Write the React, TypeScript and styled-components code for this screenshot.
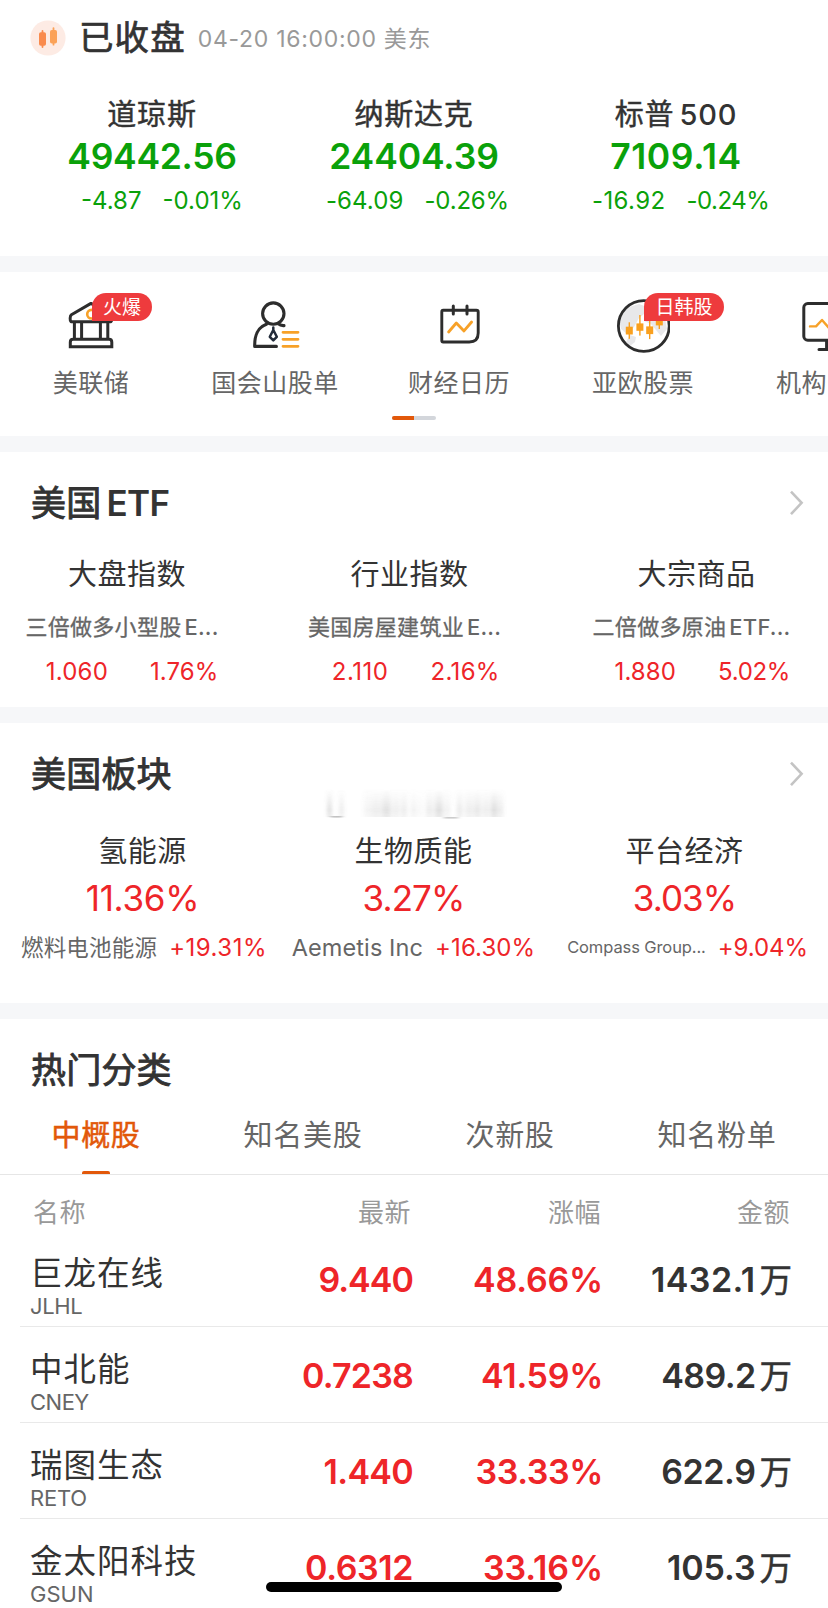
import React from 'react';
import styled, { createGlobalStyle, css } from 'styled-components';

const GlobalStyle = createGlobalStyle`
  * { box-sizing: border-box; }
  html, body { margin: 0; padding: 0; background: #fff; }
  body {
    width: 828px;
    height: 1608px;
    overflow: hidden;
    font-family: Inter, "Noto Sans CJK SC", sans-serif;
    color: #333;
  }
`;

const GREEN = '#0aa10a';
const RED = '#ee2529';
const ORANGE = '#e2580a';

const spacing = css<{ $ls?: number }>`
  letter-spacing: ${(p) => p.$ls ?? 0}px;
  white-space: nowrap;
`;

const Screen = styled.main`
  position: relative;
  width: 828px;
  height: 1608px;
  overflow: hidden;
  background: #fff;
`;

const Section = styled.section<{ $height: number }>`
  position: relative;
  display: flex;
  flex-direction: column;
  height: ${(p) => p.$height}px;
  overflow: hidden;
  > * { flex-shrink: 0; }
`;

const Band = styled.div`
  height: 16px;
  background: #f6f7f9;
`;

/* ---------- market status ---------- */

const StatusBar = styled.header`
  display: flex;
  align-items: center;
  height: 40px;
  margin-top: 18px;
  padding-left: 30px;
`;

const StatusTitle = styled.h1`
  margin: 0 0 0 13px;
  font-size: 34.5px;
  line-height: 40px;
  font-weight: 400;
  letter-spacing: 1.1px;
  -webkit-text-stroke: 0.7px #333;
`;

const StatusTime = styled.span`
  margin: 1px 0 0 12px;
  font-size: 23px;
  line-height: 40px;
  letter-spacing: 0.7px;
  color: #999;
  white-space: nowrap;
`;

const IndexGrid = styled.div`
  display: grid;
  grid-template-columns: repeat(3, 262px);
  padding: 0 21px;
  margin-top: 35px;
`;

const IndexCell = styled.div`
  display: flex;
  flex-direction: column;
  align-items: center;
`;

const IndexName = styled.div`
  margin-bottom: -2px;
  font-size: 29px;
  line-height: 43px;
  letter-spacing: 0.8px;
  -webkit-text-stroke: 0.45px #333;
`;

const IndexLatin = styled.span`
  margin-left: 5px;
  font-weight: 500;
  -webkit-text-stroke: 0;
`;

const IndexValue = styled.div<{ $ls?: number }>`
  ${spacing}
  font-size: 35.5px;
  line-height: 45px;
  font-weight: 600;
  color: ${GREEN};
`;

const SplitRow = styled.div<{ $gap: number; $color: string; $height: number; $shift?: number }>`
  display: grid;
  grid-template-columns: 1fr 1fr;
  column-gap: ${(p) => p.$gap}px;
  width: 100%;
  padding-left: ${(p) => p.$shift ?? 0}px;
  font-size: 24px;
  line-height: ${(p) => p.$height}px;
  color: ${(p) => p.$color};
  > :first-child { text-align: right; }
`;

const Figure = styled.span<{ $ls?: number }>`
  ${spacing}
`;

/* ---------- shortcuts ---------- */

const Shortcuts = styled.nav`
  display: flex;
  margin-left: -1px;
  padding-top: 27px;
  overflow: hidden;
`;

const Shortcut = styled.a`
  position: relative;
  flex: 0 0 184px;
  display: flex;
  flex-direction: column;
  align-items: center;
  svg { display: block; width: 54px; height: 54px; }
`;

const PartialShortcut = styled(Shortcut)`
  flex-basis: 93px;
  align-items: flex-start;
  padding-left: 41px;
  svg { margin-left: 23px; }
`;

const ShortcutLabel = styled.span`
  margin-top: 12px;
  font-size: 25px;
  line-height: 36px;
  letter-spacing: 0.5px;
  color: #666;
  white-space: nowrap;
`;

const Badge = styled.span<{ $width: number }>`
  position: absolute;
  left: 93px;
  top: -6px;
  width: ${(p) => p.$width}px;
  height: 28px;
  border-radius: 14px 14px 14px 0;
  background: #ee3b3d;
  color: #fff;
  font-size: 19px;
  line-height: 29px;
  text-align: center;
`;

const Pager = styled.div`
  display: flex;
  width: 44px;
  height: 4px;
  margin: 15px 0 0 392px;
  border-radius: 2px;
  background: #d3d6db;
  &::before {
    content: '';
    width: 22px;
    border-radius: 2px 0 0 2px;
    background: ${ORANGE};
  }
`;

/* ---------- section heads ---------- */

const SectionHead = styled.div`
  display: flex;
  align-items: center;
  justify-content: space-between;
  height: 44px;
  margin-top: 29px;
  padding: 0 24px 0 31px;
`;

const SectionTitle = styled.h2`
  margin: 0;
  font-size: 35px;
  line-height: 44px;
  font-weight: 400;
  letter-spacing: 0.2px;
  -webkit-text-stroke: 0.9px #333;
`;

const TitleLatin = styled.span`
  margin-left: 5px;
  font-weight: 600;
  letter-spacing: -0.6px;
  -webkit-text-stroke: 0;
`;

/* ---------- ETF ---------- */

const EtfGrid = styled.div`
  display: grid;
  grid-template-columns: 254px 311px 263px;
  margin-top: 26px;
`;

const Card = styled.div`
  display: flex;
  flex-direction: column;
  align-items: center;
`;

const EtfName = styled.div`
  font-size: 29px;
  line-height: 48px;
  letter-spacing: 0.5px;
`;

const EtfFund = styled.div`
  padding-right: 10px;
  font-size: 22px;
  line-height: 57px;
  letter-spacing: 0.3px;
  color: #666;
  white-space: nowrap;
  -webkit-text-stroke: 0.3px #666;
`;

const FundLatin = styled.span`
  margin-left: 3px;
  font-weight: 500;
  letter-spacing: 0.2px;
  -webkit-text-stroke: 0;
`;

/* ---------- sectors ---------- */

const SectorGrid = styled.div`
  display: grid;
  grid-template-columns: repeat(3, 271px);
  padding: 0 7px;
  margin-top: 30px;
`;

const SectorName = styled.div`
  font-size: 29px;
  line-height: 51px;
  letter-spacing: 0.5px;
`;

const SectorChange = styled.div<{ $ls?: number }>`
  ${spacing}
  font-size: 35px;
  line-height: 42px;
  color: ${RED};
`;

const Leader = styled.div<{ $shift: number }>`
  display: flex;
  gap: 12px;
  padding-left: ${(p) => p.$shift}px;
  line-height: 57px;
`;

const LeaderName = styled.span<{ $size: number; $ls?: number }>`
  ${spacing}
  font-size: ${(p) => p.$size}px;
  color: #666;
`;

const LeaderChange = styled.span<{ $ls?: number }>`
  ${spacing}
  font-size: 24px;
  color: ${RED};
`;

const Smudge = styled.svg`
  position: absolute;
  left: 320px;
  top: 63px;
  width: 190px;
  height: 36px;
`;

/* ---------- hot list ---------- */

const Tabs = styled.div`
  display: grid;
  grid-template-columns: repeat(4, 207px);
  height: 83px;
  padding-top: 20px;
  border-bottom: 1px solid #e6e6e6;
`;

const Tab = styled.div<{ $active?: boolean }>`
  position: relative;
  padding-right: 15px;
  text-align: center;
  font-size: 29px;
  line-height: 47px;
  letter-spacing: 0.7px;
  color: ${(p) => (p.$active ? ORANGE : '#666')};
  ${(p) =>
    p.$active &&
    css`
      -webkit-text-stroke: 0.5px ${ORANGE};
      &::after {
        content: '';
        position: absolute;
        left: 82px;
        bottom: 0;
        width: 28px;
        height: 3px;
        border-radius: 2px 2px 0 0;
        background: ${ORANGE};
      }
    `}
`;

const tableColumns = css`
  display: grid;
  grid-template-columns: 1fr 173px 190px 189px;
`;

const TableHead = styled.div`
  ${tableColumns}
  padding: 19px 38px 0 33px;
  font-size: 26px;
  line-height: 37px;
  letter-spacing: 0.5px;
  color: #999;
  > :not(:first-child) { text-align: right; }
`;

const TableRow = styled.div`
  ${tableColumns}
  height: 96px;
  margin-left: 20px;
  padding: 0 36px 0 10px;
  border-bottom: 1px solid #e9e9e9;
`;

const StockCell = styled.div`
  display: flex;
  flex-direction: column;
  padding-top: 22px;
`;

const StockName = styled.span`
  font-size: 32.5px;
  line-height: 41px;
  letter-spacing: 1px;
  white-space: nowrap;
`;

const StockCode = styled.span<{ $ls?: number }>`
  ${spacing}
  font-size: 22px;
  line-height: 24px;
  color: #666;
`;

const Num = styled.span<{ $ls?: number; $dark?: boolean }>`
  ${spacing}
  padding-top: 22px;
  text-align: right;
  font-size: 34px;
  line-height: 53px;
  font-weight: 600;
  color: ${(p) => (p.$dark ? '#333' : RED)};
`;

const Unit = styled.span`
  margin-left: 4px;
  font-size: 32.5px;
  font-weight: 400;
  letter-spacing: 0;
  -webkit-text-stroke: 0.5px #333;
`;

const HomeBar = styled.div`
  position: absolute;
  left: 266px;
  top: 1582px;
  width: 296px;
  height: 10px;
  border-radius: 5px;
  background: #000;
`;

/* ---------- drawings ---------- */

const INK = '#2d2d2d';
const AMBER = '#f7a128';

const MarketIcon = () => (
  <svg width="36" height="36" viewBox="0 0 36 36">
    <circle cx="18" cy="18" r="17.6" fill="#fdebe4" />
    <g fill="#f98b4e">
      <rect x="9" y="12.3" width="7" height="13.5" rx="1.8" />
      <rect x="11.6" y="10" width="1.8" height="18" rx="0.9" />
    </g>
    <g fill="#fba258">
      <rect x="20" y="10" width="7" height="13.5" rx="1.8" />
      <rect x="22.6" y="7.2" width="1.8" height="18.4" rx="0.9" />
    </g>
  </svg>
);

const BankIcon = () => (
  <svg viewBox="0 0 54 54" fill="none" stroke={INK} strokeWidth="3" strokeLinejoin="round">
    <circle cx="27.5" cy="15.2" r="4.3" stroke={AMBER} strokeWidth="2.6" />
    <path d="M7 22.7C5.8 21.6 5.8 17 7.4 15.8L27 4.4L46.6 15.8C48.2 17 48.2 21.6 47 22.7Z" />
    <path d="M10.4 23V40M17.6 23V40M36.4 23V40M43.8 23V40" />
    <path d="M6.3 47.7V43.2Q6.3 40.3 9.2 40.3H45Q47.8 40.3 47.8 43.2V47.7Z" strokeLinejoin="miter" />
  </svg>
);

const PersonIcon = () => (
  <svg viewBox="0 0 54 54" fill="none" stroke={INK} strokeWidth="3.1" strokeLinecap="round" strokeLinejoin="round">
    <circle cx="25.3" cy="14.6" r="10.7" />
    <path d="M18.4 25.3C10.4 28.4 6.4 34.5 6.7 47.4H28.4" />
    <path d="M29.8 24.6C32 26.3 34 26.8 36 26.6" />
    <path d="M25.3 28.5V31M25.3 31L21.8 37.8L25.3 41.4L28.8 37.8Z" stroke="#222b3a" strokeWidth="2.5" />
    <path d="M35 33.3H50M35 40.3H50M35 47.3H50" stroke={AMBER} strokeWidth="2.8" />
  </svg>
);

const CalendarIcon = () => (
  <svg viewBox="0 0 54 54" fill="none" stroke={INK} strokeWidth="2.9" strokeLinecap="round" strokeLinejoin="round">
    <path d="M11.2 11.3H44.4Q46.2 11.3 46.2 13.1V34Q46.2 43 37.2 43H11.2Q9.8 43 9.8 41.4V13Q9.8 11.3 11.2 11.3Z" />
    <path d="M21.3 7V15M35 7V15" strokeWidth="3" />
    <path d="M16.6 33L24.3 24L32 31.9L39.6 23" stroke={AMBER} strokeWidth="2.8" />
  </svg>
);

const GlobeIcon = () => (
  <svg viewBox="0 0 54 54">
    <g fill="#e8e8ea">
      <path d="M6 14L13 8L23 5L31 8L28 15L23 19L18 28L11 35L5 30L3 21Z" />
      <path d="M14 36L20 38L19 43L14 47L10 43Z" />
      <path d="M31 16L42 12L49 19L51 30L45 37L40 31L35 25L28 22Z" />
    </g>
    <circle cx="27.8" cy="27" r="25.4" fill="none" stroke={INK} strokeWidth="2.8" />
    <g fill="#f9a01f">
      <rect x="9.8" y="27.7" width="7" height="7.8" />
      <rect x="12.6" y="23.3" width="1.4" height="16.5" />
      <rect x="20.4" y="24.4" width="7" height="7.4" />
      <rect x="23.2" y="16" width="1.4" height="20.6" />
      <rect x="30.2" y="27.4" width="7" height="7.7" />
      <rect x="33" y="21.7" width="1.4" height="18.4" />
      <rect x="39.8" y="20" width="7" height="6.4" />
      <rect x="42.6" y="17" width="1.4" height="13" />
    </g>
  </svg>
);

const MonitorIcon = () => (
  <svg viewBox="0 0 54 54" fill="none" stroke={INK} strokeWidth="3" strokeLinecap="round" strokeLinejoin="round">
    <rect x="4.8" y="4.6" width="46" height="36.6" rx="4" />
    <path d="M27.6 41.5V50.4M20 50.4H36" />
    <path d="M11 27.4H17L23 21L30 29L37 21H44" stroke={AMBER} strokeWidth="2.4" />
  </svg>
);

const Chevron = () => (
  <svg width="16" height="26" viewBox="0 0 16 26" fill="none" stroke="#c4c4c4" strokeWidth="2.6">
    <path d="M3 1.6L13.6 12.8L3 24.2" />
  </svg>
);

const smudgeBars: [number, number, number][] = [
  [8, 3, 0.34], [20, 3, 0.2], [44, 8, 0.08], [52, 9, 0.12], [62, 9, 0.2], [73, 6, 0.12],
  [81, 6, 0.13], [91, 5, 0.1], [98, 4, 0.06], [106, 7, 0.13], [115, 8, 0.22], [125, 5, 0.1],
  [137, 5, 0.16], [145, 8, 0.12], [154, 7, 0.16], [163, 6, 0.13], [171, 6, 0.24], [178, 5, 0.14],
];

const BlurredCaption = () => (
  <Smudge viewBox="0 0 190 36" aria-hidden="true">
    <defs>
      <linearGradient id="fade" x1="0" y1="0" x2="0" y2="1">
        <stop offset="0" stopColor="#777" stopOpacity="0" />
        <stop offset="0.75" stopColor="#777" stopOpacity="0.9" />
        <stop offset="1" stopColor="#777" stopOpacity="0.6" />
      </linearGradient>
      <filter id="soft" x="-5%" y="-10%" width="110%" height="120%">
        <feGaussianBlur stdDeviation="2 0.5" />
      </filter>
    </defs>
    <g fill="url(#fade)" filter="url(#soft)">
      {smudgeBars.map(([x, w, o]) => (
        <rect key={x} x={x} y="3" width={w} height="28" opacity={o * 1.2} />
      ))}
      <rect x="11" y="30" width="11" height="1.6" fill="#999" opacity="0.6" />
      <rect x="124" y="31" width="14" height="1.6" fill="#999" opacity="0.5" />
    </g>
  </Smudge>
);

/* ---------- data ---------- */

const indices = [
  { name: '道琼斯', latin: '', value: '49442.56', ls: -0.3, diff: '-4.87', dls: 0, pct: '-0.01%', pls: 0, shift: 0 },
  { name: '纳斯达克', latin: '', value: '24404.39', ls: -0.1, diff: '-64.09', dls: 0.1, pct: '-0.26%', pls: -0.2, shift: -1 },
  { name: '标普', latin: '500', value: '7109.14', ls: 0.6, diff: '-16.92', dls: 0.4, pct: '-0.24%', pls: -0.5, shift: 0 },
];

const etfs = [
  { name: '大盘指数', fund: '三倍做多小型股', latin: 'E...', value: '1.060', vls: 0.2, pct: '1.76%', ls: 0.1, shift: 4 },
  { name: '行业指数', fund: '美国房屋建筑业', latin: 'E...', value: '2.110', vls: 0.5, pct: '2.16%', ls: 0.3, shift: 0 },
  { name: '大宗商品', fund: '二倍做多原油', latin: 'ETF...', value: '1.880', vls: 0.1, pct: '5.02%', ls: -0.3, shift: 1 },
];

const sectors = [
  { name: '氢能源', pct: '11.36%', ls: -0.3, leader: '燃料电池能源', size: 22.5, nls: 0.2, change: '+19.31%', cls: 0.5, shift: 3 },
  { name: '生物质能', pct: '3.27%', ls: -0.9, leader: 'Aemetis Inc', size: 23.5, nls: 0.1, change: '+16.30%', cls: 0.1, shift: 0 },
  { name: '平台经济', pct: '3.03%', ls: -0.9, leader: 'Compass Group...', size: 16.5, nls: -0.1, change: '+9.04%', cls: -0.1, shift: 6 },
];

const stocks = [
  { name: '巨龙在线', code: 'JLHL', kls: -0.4, price: '9.440', ls: -0.95, pct: '48.66%', pls: -0.2, amount: '1432.1', als: 0.4 },
  { name: '中北能', code: 'CNEY', kls: -0.5, price: '0.7238', ls: -0.8, pct: '41.59%', pls: -0.3, amount: '489.2', als: -0.6 },
  { name: '瑞图生态', code: 'RETO', kls: -0.2, price: '1.440', ls: -0.7, pct: '33.33%', pls: -0.4, amount: '622.9', als: -0.4 },
  { name: '金太阳科技', code: 'GSUN', kls: 0, price: '0.6312', ls: -0.4, pct: '33.16%', pls: -0.1, amount: '105.3', als: -0.1 },
];

export default function App() {
  return (
    <>
      <GlobalStyle />
      <Screen>
        <Section $height={256}>
          <StatusBar>
            <MarketIcon />
            <StatusTitle>已收盘</StatusTitle>
            <StatusTime>04-20 16:00:00 美东</StatusTime>
          </StatusBar>
          <IndexGrid>
            {indices.map((i) => (
              <IndexCell key={i.name}>
                <IndexName>
                  {i.name}
                  {i.latin && <IndexLatin>{i.latin}</IndexLatin>}
                </IndexName>
                <IndexValue $ls={i.ls}>{i.value}</IndexValue>
                <SplitRow $gap={21} $color={GREEN} $height={44}>
                  <Figure $ls={i.dls}>{i.diff}</Figure>
                  <Figure $ls={i.pls}>{i.pct}</Figure>
                </SplitRow>
              </IndexCell>
            ))}
          </IndexGrid>
        </Section>
        <Band />

        <Section $height={164}>
          <Shortcuts>
            <Shortcut>
              <BankIcon />
              <Badge $width={60}>火爆</Badge>
              <ShortcutLabel>美联储</ShortcutLabel>
            </Shortcut>
            <Shortcut>
              <PersonIcon />
              <ShortcutLabel>国会山股单</ShortcutLabel>
            </Shortcut>
            <Shortcut>
              <CalendarIcon />
              <ShortcutLabel>财经日历</ShortcutLabel>
            </Shortcut>
            <Shortcut>
              <GlobeIcon />
              <Badge $width={80}>日韩股</Badge>
              <ShortcutLabel>亚欧股票</ShortcutLabel>
            </Shortcut>
            <PartialShortcut>
              <MonitorIcon />
              <ShortcutLabel>机构</ShortcutLabel>
            </PartialShortcut>
          </Shortcuts>
          <Pager />
        </Section>
        <Band />

        <Section $height={255}>
          <SectionHead>
            <SectionTitle>
              美国<TitleLatin>ETF</TitleLatin>
            </SectionTitle>
            <Chevron />
          </SectionHead>
          <EtfGrid>
            {etfs.map((e) => (
              <Card key={e.name}>
                <EtfName>{e.name}</EtfName>
                <EtfFund>
                  {e.fund}
                  <FundLatin>{e.latin}</FundLatin>
                </EtfFund>
                <SplitRow $gap={42} $color={RED} $height={32} $shift={e.shift}>
                  <Figure $ls={e.vls}>{e.value}</Figure>
                  <Figure $ls={e.ls}>{e.pct}</Figure>
                </SplitRow>
              </Card>
            ))}
          </EtfGrid>
        </Section>
        <Band />

        <Section $height={280}>
          <SectionHead>
            <SectionTitle>美国板块</SectionTitle>
            <Chevron />
          </SectionHead>
          <BlurredCaption />
          <SectorGrid>
            {sectors.map((s) => (
              <Card key={s.name}>
                <SectorName>{s.name}</SectorName>
                <SectorChange $ls={s.ls}>{s.pct}</SectorChange>
                <Leader $shift={s.shift}>
                  <LeaderName $size={s.size} $ls={s.nls}>{s.leader}</LeaderName>
                  <LeaderChange $ls={s.cls}>{s.change}</LeaderChange>
                </Leader>
              </Card>
            ))}
          </SectorGrid>
        </Section>
        <Band />

        <Section $height={589}>
          <SectionHead>
            <SectionTitle>热门分类</SectionTitle>
          </SectionHead>
          <Tabs>
            <Tab $active>中概股</Tab>
            <Tab>知名美股</Tab>
            <Tab>次新股</Tab>
            <Tab>知名粉单</Tab>
          </Tabs>
          <TableHead>
            <span>名称</span>
            <span>最新</span>
            <span>涨幅</span>
            <span>金额</span>
          </TableHead>
          {stocks.map((s) => (
            <TableRow key={s.code}>
              <StockCell>
                <StockName>{s.name}</StockName>
                <StockCode $ls={s.kls}>{s.code}</StockCode>
              </StockCell>
              <Num $ls={s.ls}>{s.price}</Num>
              <Num $ls={s.pls}>{s.pct}</Num>
              <Num $ls={s.als} $dark>
                {s.amount}
                <Unit>万</Unit>
              </Num>
            </TableRow>
          ))}
        </Section>
        <HomeBar />
      </Screen>
    </>
  );
}
